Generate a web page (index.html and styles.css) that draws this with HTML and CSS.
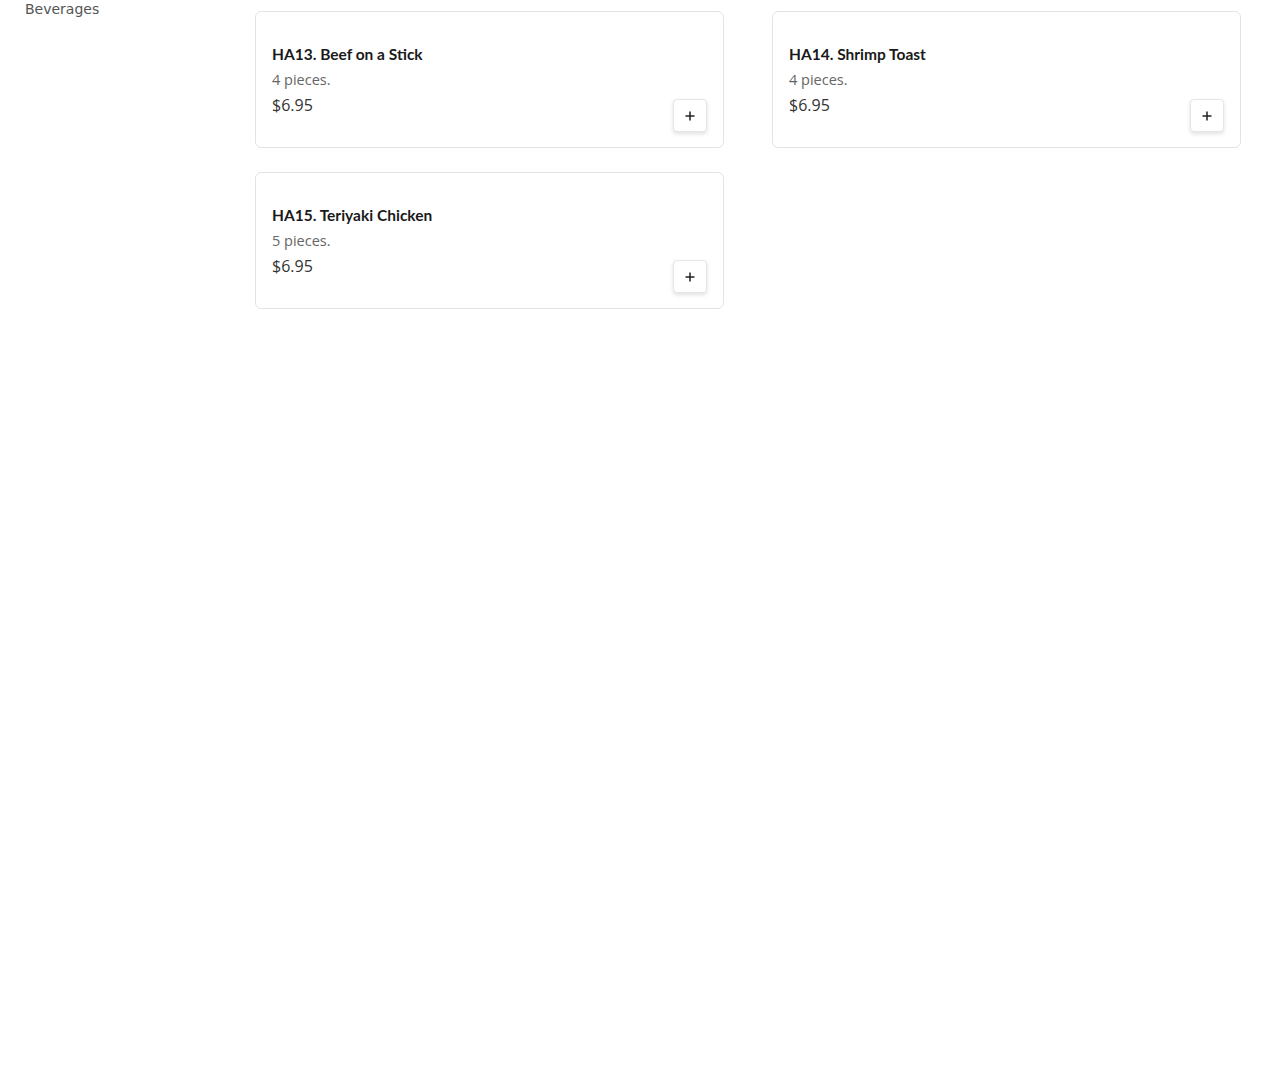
FILE: index.html
```html
<!DOCTYPE html>
<html lang="en">
<head>
<meta charset="utf-8">
<title>Menu</title>
<link rel="stylesheet" href="styles.css">
</head>
<body>
<div class="page">
  <aside class="sidebar">
    <a class="cat-link" href="#">Beverages</a>
  </aside>
  <main class="grid">
    <div class="card">
      <div class="info">
        <div class="title">HA13. Beef on a Stick</div>
        <div class="desc">4 pieces.</div>
        <div class="price">$6.95</div>
      </div>
      <button class="add" aria-label="Add">
        <svg width="12" height="12" viewBox="0 0 12 12"><path d="M6 1.5v9M1.5 6h9" stroke="#222" stroke-width="1.5" fill="none"/></svg>
      </button>
    </div>
    <div class="card">
      <div class="info">
        <div class="title">HA14. Shrimp Toast</div>
        <div class="desc">4 pieces.</div>
        <div class="price">$6.95</div>
      </div>
      <button class="add" aria-label="Add">
        <svg width="12" height="12" viewBox="0 0 12 12"><path d="M6 1.5v9M1.5 6h9" stroke="#222" stroke-width="1.5" fill="none"/></svg>
      </button>
    </div>
    <div class="card">
      <div class="info">
        <div class="title">HA15. Teriyaki Chicken</div>
        <div class="desc">5 pieces.</div>
        <div class="price">$6.95</div>
      </div>
      <button class="add" aria-label="Add">
        <svg width="12" height="12" viewBox="0 0 12 12"><path d="M6 1.5v9M1.5 6h9" stroke="#222" stroke-width="1.5" fill="none"/></svg>
      </button>
    </div>
  </main>
</div>
</body>
</html>
```
FILE: styles.css
```css
html, body {
  margin: 0;
  padding: 0;
  background: #fff;
}
.page {
  display: flex;
  padding: 0 29px 0 25px;
}
.sidebar {
  width: 230px;
  flex: none;
}
.cat-link {
  display: block;
  font-family: "DejaVu Sans", sans-serif;
  font-size: 14px;
  line-height: 18px;
  color: #555;
  text-decoration: none;
}
.grid {
  flex: 1;
  display: grid;
  grid-template-columns: 469px 469px;
  column-gap: 48px;
  row-gap: 24px;
  padding-top: 11px;
  align-content: start;
}
.card {
  box-sizing: border-box;
  height: 137px;
  border: 1px solid #e3e3e3;
  border-radius: 6px;
  padding: 32px 16px 15px 16px;
  display: flex;
  justify-content: space-between;
  align-items: flex-end;
}
.info {
  align-self: flex-start;
  display: flex;
  flex-direction: column;
}
.title {
  font-family: "Lato", sans-serif;
  font-weight: 700;
  font-size: 15.5px;
  line-height: 20px;
  color: #1a1a1a;
}
.desc {
  margin-top: 5px;
  font-family: "Open Sans", sans-serif;
  font-size: 14.5px;
  line-height: 21px;
  color: #666;
}
.price {
  margin-top: 4px;
  font-family: "Open Sans", sans-serif;
  font-size: 16px;
  line-height: 22px;
  color: #333;
}
.add {
  width: 34px;
  height: 33px;
  padding: 0;
  border: 1px solid #e6e6e6;
  border-radius: 4px;
  background: #fff;
  box-shadow: 0 2px 4px rgba(0, 0, 0, 0.12);
  display: flex;
  align-items: center;
  justify-content: center;
  cursor: pointer;
}
```
